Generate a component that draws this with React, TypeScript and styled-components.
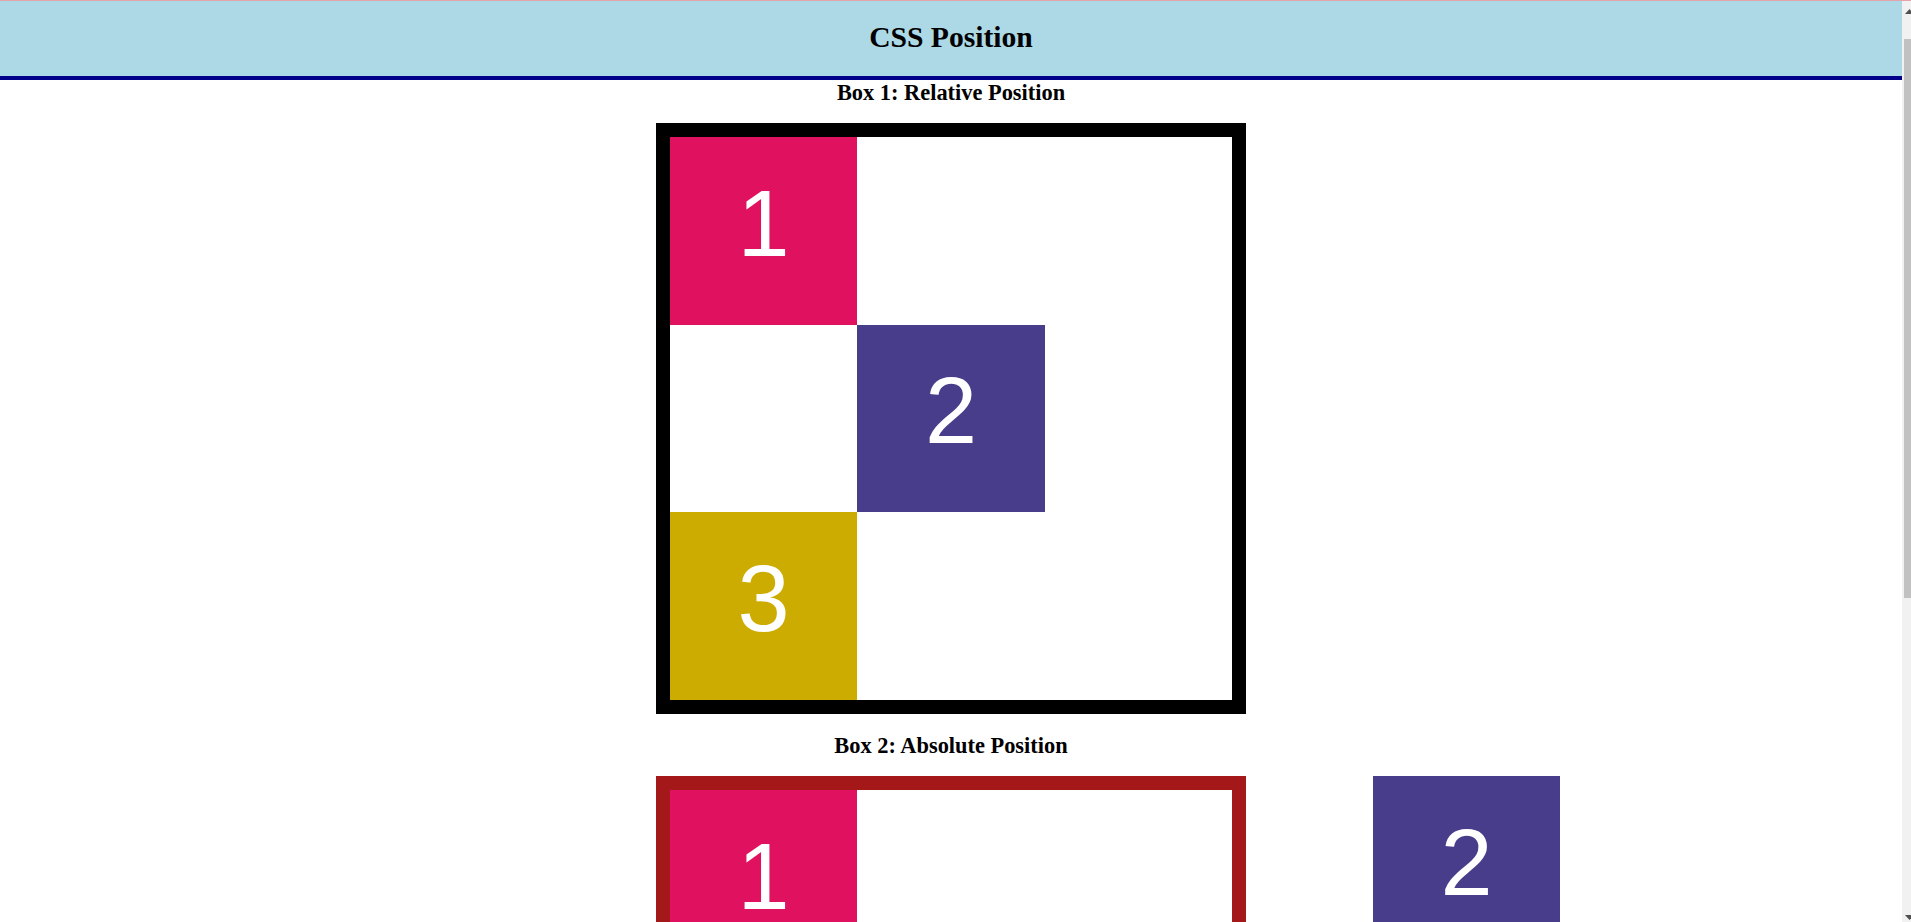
import React from "react";
import styled, { createGlobalStyle, css } from "styled-components";

const GlobalStyle = createGlobalStyle`
  html, body {
    margin: 0;
    padding: 0;
    background: #ffffff;
  }
  body {
    border-top: 1px solid #e4a2aa;
    font-family: "Liberation Serif", "Times New Roman", serif;
    color: #000000;
  }
`;

const Page = styled.div`
  margin-right: 9px;
`;

const Header = styled.header`
  box-sizing: content-box;
  height: 75px;
  border-bottom: 4px solid #00008b;
  background: #add8e6;
  display: flex;
  align-items: center;
  justify-content: center;
`;

const PageTitle = styled.h1`
  margin: 0;
  padding-bottom: 2px;
  font-size: 29.6px;
  font-weight: bold;
`;

const Main = styled.main`
  display: flex;
  flex-direction: column;
  align-items: center;
  padding-bottom: 112px;
`;

const SectionTitle = styled.h3`
  margin: 0 0 18px;
  font-size: 22.4px;
  line-height: 25px;
  font-weight: bold;
`;

const Frame = styled.div<{ $border: string }>`
  position: relative;
  box-sizing: content-box;
  width: 562px;
  height: 563px;
  border: 14px solid ${(p) => p.$border};
  margin-bottom: 19px;
`;

type Mode = "static" | "relative" | "absolute";

const Tile = styled.div<{ $bg: string; $mode?: Mode }>`
  box-sizing: border-box;
  width: 187.33px;
  height: 187.67px;
  padding-bottom: 14px;
  background: ${(p) => p.$bg};
  color: #ffffff;
  font-family: "Liberation Sans", Arial, sans-serif;
  font-size: 93.7px;
  display: flex;
  align-items: center;
  justify-content: center;
  ${(p) =>
    p.$mode === "relative" &&
    css`
      position: relative;
      left: 187.33px;
    `}
  ${(p) =>
    p.$mode === "absolute" &&
    css`
      position: absolute;
      top: -14px;
      left: 703px;
    `}
`;

/* Window scrollbar as it appears at the right edge of the screenshot */
const ScrollRail = styled.div`
  position: fixed;
  top: 1px;
  right: 0;
  bottom: 0;
  width: 9px;
  background: #f1f1f1;
  overflow: hidden;
`;

const ScrollThumb = styled.div`
  position: absolute;
  top: 38px;
  left: 2px;
  right: 0;
  height: 559px;
  background: #c1c1c1;
`;

const ScrollArrow = styled.svg<{ $down?: boolean }>`
  position: absolute;
  left: 3px;
  width: 9px;
  height: 5px;
  ${(p) => (p.$down ? "bottom: 2px;" : "top: 8px;")}
`;

const PINK = "#e0115f";
const SLATE = "#483d8b";
const GOLD = "#ccac00";

export default function App() {
  return (
    <>
      <GlobalStyle />
      <Page>
        <Header>
          <PageTitle>CSS Position</PageTitle>
        </Header>
        <Main>
          <SectionTitle>Box 1: Relative Position</SectionTitle>
          <Frame $border="#000000">
            <Tile $bg={PINK}>1</Tile>
            <Tile $bg={SLATE} $mode="relative">2</Tile>
            <Tile $bg={GOLD}>3</Tile>
          </Frame>
          <SectionTitle>Box 2: Absolute Position</SectionTitle>
          <Frame $border="#a5181a">
            <Tile $bg={PINK}>1</Tile>
            <Tile $bg={SLATE} $mode="absolute">2</Tile>
            <Tile $bg={GOLD}>3</Tile>
          </Frame>
        </Main>
      </Page>
      <ScrollRail>
        <ScrollArrow viewBox="0 0 9 5">
          <path d="M0 5 L4.5 0 L9 5 Z" fill="#505050" />
        </ScrollArrow>
        <ScrollThumb />
        <ScrollArrow $down viewBox="0 0 9 5">
          <path d="M0 0 L9 0 L4.5 5 Z" fill="#505050" />
        </ScrollArrow>
      </ScrollRail>
    </>
  );
}
